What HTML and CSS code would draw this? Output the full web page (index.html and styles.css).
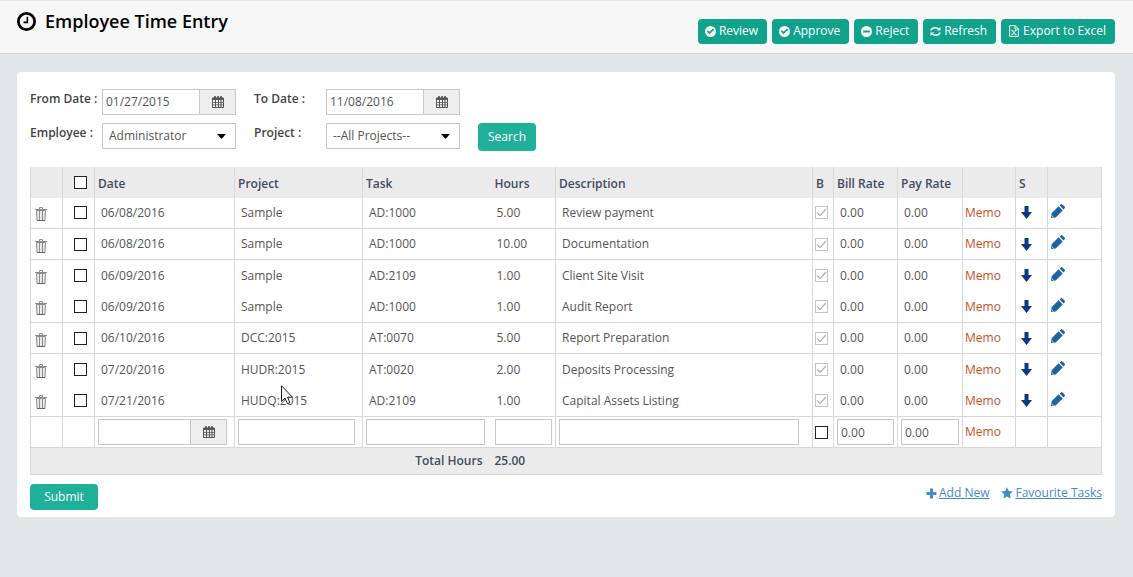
FILE: index.html
```html
<!DOCTYPE html>
<html lang="en">
<head>
<meta charset="utf-8">
<title>Employee Time Entry</title>
<link rel="stylesheet" href="styles.css">
</head>
<body>
<svg class="sprite" aria-hidden="true">
  <symbol id="clock" viewBox="0 0 18 18"><circle cx="9" cy="9" r="7.700" fill="none" stroke="currentColor" stroke-width="2.600"/><path d="M9.800 4.600V9.800H6.200" fill="none" stroke="currentColor" stroke-width="1.500"/></symbol>
  <symbol id="ok" viewBox="0 0 10 10"><path fill="currentColor" fill-rule="evenodd" d="M5 0a5 5 0 1 0 0 10A5 5 0 0 0 5 0ZM1.600 5l1.200-1.200 1.400 1.400 3-3 1.200 1.200L4.200 7.600Z"/></symbol>
  <symbol id="minus" viewBox="0 0 10 10"><path fill="currentColor" fill-rule="evenodd" d="M5 0a5 5 0 1 0 0 10A5 5 0 0 0 5 0ZM2 4.100H8V5.900H2Z"/></symbol>
  <symbol id="sync" viewBox="0 0 12 12"><path d="M.8 4.800C2 2.500 3.800 1.900 5.600 1.900c1.800 0 3 .6 4 1.600M11.200 7.200C10 9.500 8.200 10.100 6.400 10.100c-1.800 0-3-.6-4-1.600" fill="none" stroke="currentColor" stroke-width="1.600"/><path fill="currentColor" d="M11.500 1V5H7.500ZM.5 11V7h4Z"/></symbol>
  <symbol id="excel" viewBox="0 0 10 12"><path d="M.6.6H6.200L9.400 3.800V11.400H.6ZM6 .6V4H9.400M3 5.500l4 4M7 5.500l-4 4M2.500 5.500h1.800M5.700 5.500h1.800M2.500 9.500h1.800M5.700 9.500h1.800" fill="none" stroke="currentColor" stroke-width="1"/></symbol>
  <symbol id="cal" viewBox="0 0 12 12"><path fill="currentColor" fill-rule="evenodd" d="M1 1.500H2V.8Q2 0 3 0T4 .8V1.500H5V.8Q5 0 6 0T7 .8V1.500H8V.8Q8 0 9 0T10 .8V1.500H11Q12 1.500 12 2.500V11Q12 12 11 12H1Q0 12 0 11V2.500Q0 1.500 1 1.500ZM1 4V6H3V4ZM4 4V6H6V4ZM7 4V6H8.500V4ZM9.500 4V6H11V4ZM1 6.800V8.500H3V6.800ZM4 6.800V8.500H6V6.800ZM7 6.800V8.500H8.500V6.800ZM9.500 6.800V8.500H11V6.800ZM1 9.300V11H3V9.300ZM4 9.300V11H6V9.300ZM7 9.300V11H8.500V9.300ZM9.500 9.300V11H11V9.300Z"/></symbol>
  <symbol id="trash" viewBox="0 0 12 14"><path d="M1.500 3.500H10.500L10 13.500H2Z" fill="#e8e8e8" stroke="#8c8c8c"/><path d="M4.500 4V13M7.500 4V13" stroke="#8c8c8c"/><path d="M0 2.500H12M4.500 2V.5H7.500V2" fill="none" stroke="#8c8c8c"/><path d="M2 13.500H10" stroke="#666"/></symbol>
  <symbol id="down" viewBox="0 0 11 13"><path fill="#0d3880" d="M3.500 0H7.500V6H11L5.500 13 0 6H3.500Z"/></symbol>
  <symbol id="pencil" viewBox="0 0 14 14"><path fill="#1c63a6" d="M0 14 .6 9.300 7.600 2.300 11.700 6.400 4.700 13.400ZM8.600 1.500 9.800.4Q10.600-.3 11.400.4L13.600 2.600Q14.300 3.400 13.600 4.200L12.500 5.400Z"/><path d="M.7 11.500 2.500 13.300" stroke="#fff" stroke-width=".8"/></symbol>
  <symbol id="plus" viewBox="0 0 10 10"><path fill="currentColor" d="M3.600.5H6.400V3.600H9.500V6.400H6.400V9.500H3.600V6.400H.5V3.600H3.600Z"/></symbol>
  <symbol id="star" viewBox="0 0 12 12"><path fill="currentColor" d="M6 .3 7.700 4 11.800 4.500 8.800 7.300 9.600 11.400 6 9.400 2.400 11.400 3.200 7.300.2 4.500 4.300 4Z"/></symbol>
  <symbol id="pointer" viewBox="0 0 12 20"><path d="M.5.8V16.300L4 13 6.400 18.700 8.900 17.600 6.500 12.200H11.500Z" fill="#fff" stroke="#1b1b2b"/></symbol>
</svg>

<header class="page-head">
  <h1 class="title"><svg class="i18"><use href="#clock"/></svg>Employee Time Entry</h1>
  <div class="actions">
    <button type="button" class="btn action"><svg class="i10"><use href="#ok"/></svg>Review</button>
    <button type="button" class="btn action"><svg class="i10"><use href="#ok"/></svg>Approve</button>
    <button type="button" class="btn action"><svg class="i10"><use href="#minus"/></svg>Reject</button>
    <button type="button" class="btn action"><svg class="i10"><use href="#sync"/></svg>Refresh</button>
    <button type="button" class="btn action"><svg class="i12"><use href="#excel"/></svg>Export to Excel</button>
  </div>
</header>

<main class="panel">
  <form class="filters">
    <label for="from">From Date :</label>
    <div class="date-box"><input id="from" type="text" value="01/27/2015"><button type="button" aria-label="Pick from date"><svg class="i12"><use href="#cal"/></svg></button></div>
    <label for="to" class="second">To Date :</label>
    <div class="date-box"><input id="to" type="text" value="11/08/2016"><button type="button" aria-label="Pick to date"><svg class="i12"><use href="#cal"/></svg></button></div>
    <span></span>
    <label for="emp">Employee :</label>
    <select id="emp"><option>Administrator</option></select>
    <label for="proj" class="second">Project :</label>
    <select id="proj"><option>--All Projects--</option></select>
    <button type="button" class="btn search">Search</button>
  </form>

  <table class="grid">
    <colgroup><col class="c-icon"><col class="c-icon"><col class="c-date"><col class="c-proj"><col class="c-task"><col class="c-hours"><col class="c-desc"><col class="c-bill"><col class="c-hours"><col class="c-rate"><col class="c-memo"><col class="c-icon"><col class="c-edit"></colgroup>
    <thead>
      <tr><th></th><th class="pick"><input type="checkbox" aria-label="Select all"></th><th>Date</th><th>Project</th><th class="open">Task</th><th>Hours</th><th>Description</th><th>B</th><th>Bill Rate</th><th>Pay Rate</th><th></th><th>S</th><th></th></tr>
    </thead>
    <tbody id="rows"></tbody>
    <tbody>
      <tr class="entry">
        <td></td><td></td>
        <td><div class="date-box"><input type="text" aria-label="Date"><button type="button" aria-label="Pick date"><svg class="i12"><use href="#cal"/></svg></button></div></td>
        <td><input type="text" class="field" aria-label="Project"></td>
        <td class="open"><input type="text" class="field" aria-label="Task"></td>
        <td class="tight"><input type="text" class="field" aria-label="Hours"></td>
        <td class="wide"><input type="text" class="field" aria-label="Description"></td>
        <td class="bill"><input type="checkbox" aria-label="Billable"></td>
        <td class="tight"><input type="text" class="field" value="0.00" aria-label="Bill rate"></td>
        <td class="tight"><input type="text" class="field" value="0.00" aria-label="Pay rate"></td>
        <td class="memo"><a href="#">Memo</a></td><td></td><td></td>
      </tr>
    </tbody>
    <tfoot>
      <tr><td colspan="5" class="total">Total Hours</td><td colspan="8">25.00</td></tr>
    </tfoot>
  </table>

  <div class="foot">
    <button type="button" class="btn submit">Submit</button>
    <nav class="links">
      <span><svg class="i10"><use href="#plus"/></svg><a href="#">Add New</a></span>
      <span><svg class="i12"><use href="#star"/></svg><a href="#">Favourite Tasks</a></span>
    </nav>
  </div>
</main>
<svg class="cursor" aria-hidden="true"><use href="#pointer"/></svg>
<script src="rows.js"></script>
</body>
</html>
```
FILE: rows.js
```js
const entries = [
  ["06/08/2016", "Sample", "AD:1000", "5.00", "Review payment"],
  ["06/08/2016", "Sample", "AD:1000", "10.00", "Documentation"],
  ["06/09/2016", "Sample", "AD:2109", "1.00", "Client Site Visit"],
  ["06/09/2016", "Sample", "AD:1000", "1.00", "Audit Report"],
  ["06/10/2016", "DCC:2015", "AT:0070", "5.00", "Report Preparation"],
  ["07/20/2016", "HUDR:2015", "AT:0020", "2.00", "Deposits Processing"],
  ["07/21/2016", "HUDQ:2015", "AD:2109", "1.00", "Capital Assets Listing"]
];
document.getElementById("rows").innerHTML = entries.map(([date, project, task, hours, text]) => `
  <tr>
    <td class="del"><button type="button" class="icon" aria-label="Delete"><svg class="trash"><use href="#trash"/></svg></button></td>
    <td class="pick"><input type="checkbox" aria-label="Select row"></td>
    <td>${date}</td><td>${project}</td><td class="open">${task}</td><td>${hours}</td><td>${text}</td>
    <td class="bill"><input type="checkbox" checked disabled aria-label="Billable"></td>
    <td>0.00</td><td>0.00</td>
    <td class="memo"><a href="#">Memo</a></td>
    <td class="act"><button type="button" class="icon" aria-label="Submit row"><svg class="down"><use href="#down"/></svg></button></td>
    <td class="act edit"><button type="button" class="icon" aria-label="Edit"><svg class="pencil"><use href="#pencil"/></svg></button></td>
  </tr>`).join("");
```
FILE: styles.css
```css
* { box-sizing: border-box; }
body {
  margin: 0;
  background: #e2e6e9;
  color: #555;
  font: 12px/18px "Open Sans", "Noto Sans", sans-serif;
}
input, select, button { font: inherit; color: inherit; margin: 0; }
svg { display: block; flex: none; }
.sprite { position: absolute; width: 0; height: 0; }
.i10 { width: 11px; height: 11px; }
.i12 { width: 12px; height: 12px; }
.i18 { width: 19px; height: 19px; }

.page-head {
  display: flex;
  justify-content: space-between;
  padding: 0 18px 0 17px;
  background: #f7f7f7;
  border-top: 1px solid #e8e8e8;
  border-bottom: 1px solid #d3d7da;
}
.title {
  display: flex;
  align-items: center;
  gap: 9px;
  margin: 0;
  height: 40px;
  color: #000;
  font-size: 18px;
  font-weight: 600;
}
.actions { display: flex; gap: 5px; padding: 18px 0 9px; }
.btn {
  display: flex;
  align-items: center;
  justify-content: center;
  border: 0;
  border-radius: 4px;
  background: #1fb099;
  color: #fff;
}
.action { gap: 3px; height: 25px; padding: 0 9px 1px 7px; background: #10a28b; }

.panel {
  margin: 18px 18px 0 17px;
  padding: 17px 13px 7px;
  background: #fff;
  border-radius: 4px;
  box-shadow: 0 1px 1px #d3d7da;
}
.filters {
  display: grid;
  grid-template-columns: 72px 134px 90px 134px auto;
  row-gap: 8px;
  justify-content: start;
  margin-bottom: 16px;
}
.filters label { font-weight: 600; color: #444; padding-top: 1px; white-space: nowrap; }
.filters .second { margin-left: 18px; }
.filters select {
  appearance: none;
  height: 26px;
  padding: 0 6px;
  border: 1px solid #c8c8c8;
  border-radius: 0;
  background: url("data:image/svg+xml,%3Csvg xmlns='http://www.w3.org/2000/svg' width='9' height='5'%3E%3Cpath d='M0 0H9L4.500 5Z'/%3E%3C/svg%3E") no-repeat right 9px center #fff;
}
.search { width: 58px; height: 28px; margin-left: 18px; }

.date-box { display: flex; height: 26px; border: 1px solid #c8c8c8; }
.date-box input { flex: 1; min-width: 0; padding: 0 3px; border: 0; background: #fff; }
.date-box button {
  display: flex;
  align-items: center;
  justify-content: center;
  width: 36px;
  padding: 0;
  border: 0;
  border-left: 1px solid #c8c8c8;
  background: #eee;
}

.grid { width: 100%; table-layout: fixed; border-collapse: collapse; }
.c-icon { width: 32px; }
.c-date { width: 140px; }
.c-proj { width: 128px; }
.c-task { width: 129px; }
.c-hours { width: 64px; }
.c-bill { width: 21px; }
.c-rate { width: 65px; }
.c-memo { width: 53px; }
.c-edit { width: 54px; }
.grid td, .grid th { border: 1px solid #d8d8d8; padding: 0 0 0 6px; text-align: left; white-space: nowrap; }
.grid th { height: 30px; padding: 3px 0 0 3px; background: #ebebeb; color: #444c5c; font-weight: 600; border-top-color: #ebebeb; border-bottom: 0; }
.grid td { height: 31px; }
#rows tr:nth-child(3n) td { height: 32px; border-bottom: 0; }
#rows tr:nth-child(3n + 1) td { border-top: 0; }
.grid .open { border-right: 0; }
.grid .open + * { border-left: 0; padding-left: 5px; }
.grid th.open + th { padding-left: 3px; }
.grid .pick { padding: 0 0 0 11px; }
.grid .bill { padding: 0 0 0 2px; }
.grid .del { padding: 3px 0 0 4px; }
.grid .memo { padding-left: 2px; }
.grid .act { padding: 0 0 0 5px; }
.grid .edit { padding: 0 0 4px 3px; }
.grid .entry td { padding: 0 7px 0 3px; }
.grid .entry .tight { padding-right: 3px; }
.grid .entry .wide { padding-right: 13px; }
.grid .entry .bill, .grid .entry .memo { padding: 0 0 0 2px; }
.grid .date-box { width: 129px; }
.memo a { color: #c9501f; text-decoration: none; }

input[type="checkbox"] { appearance: none; display: block; width: 13px; height: 13px; border: 1px solid #222; background: #fff; }
input[type="checkbox"]:disabled {
  border-color: #c4c4c4;
  background: url("data:image/svg+xml,%3Csvg xmlns='http://www.w3.org/2000/svg' width='11' height='11'%3E%3Cpath d='M1 5.500 4 8.500 10 2' fill='none' stroke='%23b0b0b0' stroke-width='1.200'/%3E%3C/svg%3E") no-repeat center;
}
.icon { display: block; padding: 0; border: 0; background: none; }
.trash { width: 12px; height: 14px; }
.down { width: 11px; height: 13px; }
.pencil { width: 14px; height: 14px; }
.field { display: block; width: 100%; height: 26px; padding: 0 3px; border: 1px solid #c8c8c8; background: #fff; }
.grid tfoot td { height: 27px; padding: 0 0 0 3px; background: #ebebeb; color: #444c5c; font-weight: 600; }
.grid tfoot .total { padding: 0 9px 0 0; text-align: right; border-right: 0; }
.grid tfoot .total + td { border-left: 0; }

.foot { display: flex; justify-content: space-between; margin-top: 9px; }
.submit { width: 68px; height: 26px; }
.links { display: flex; gap: 12px; }
.links span { display: flex; align-items: center; gap: 2px; height: 18px; color: #428bca; }
.links a { color: #428bca; }
.cursor { position: absolute; left: 281px; top: 385px; width: 12px; height: 20px; }
```
